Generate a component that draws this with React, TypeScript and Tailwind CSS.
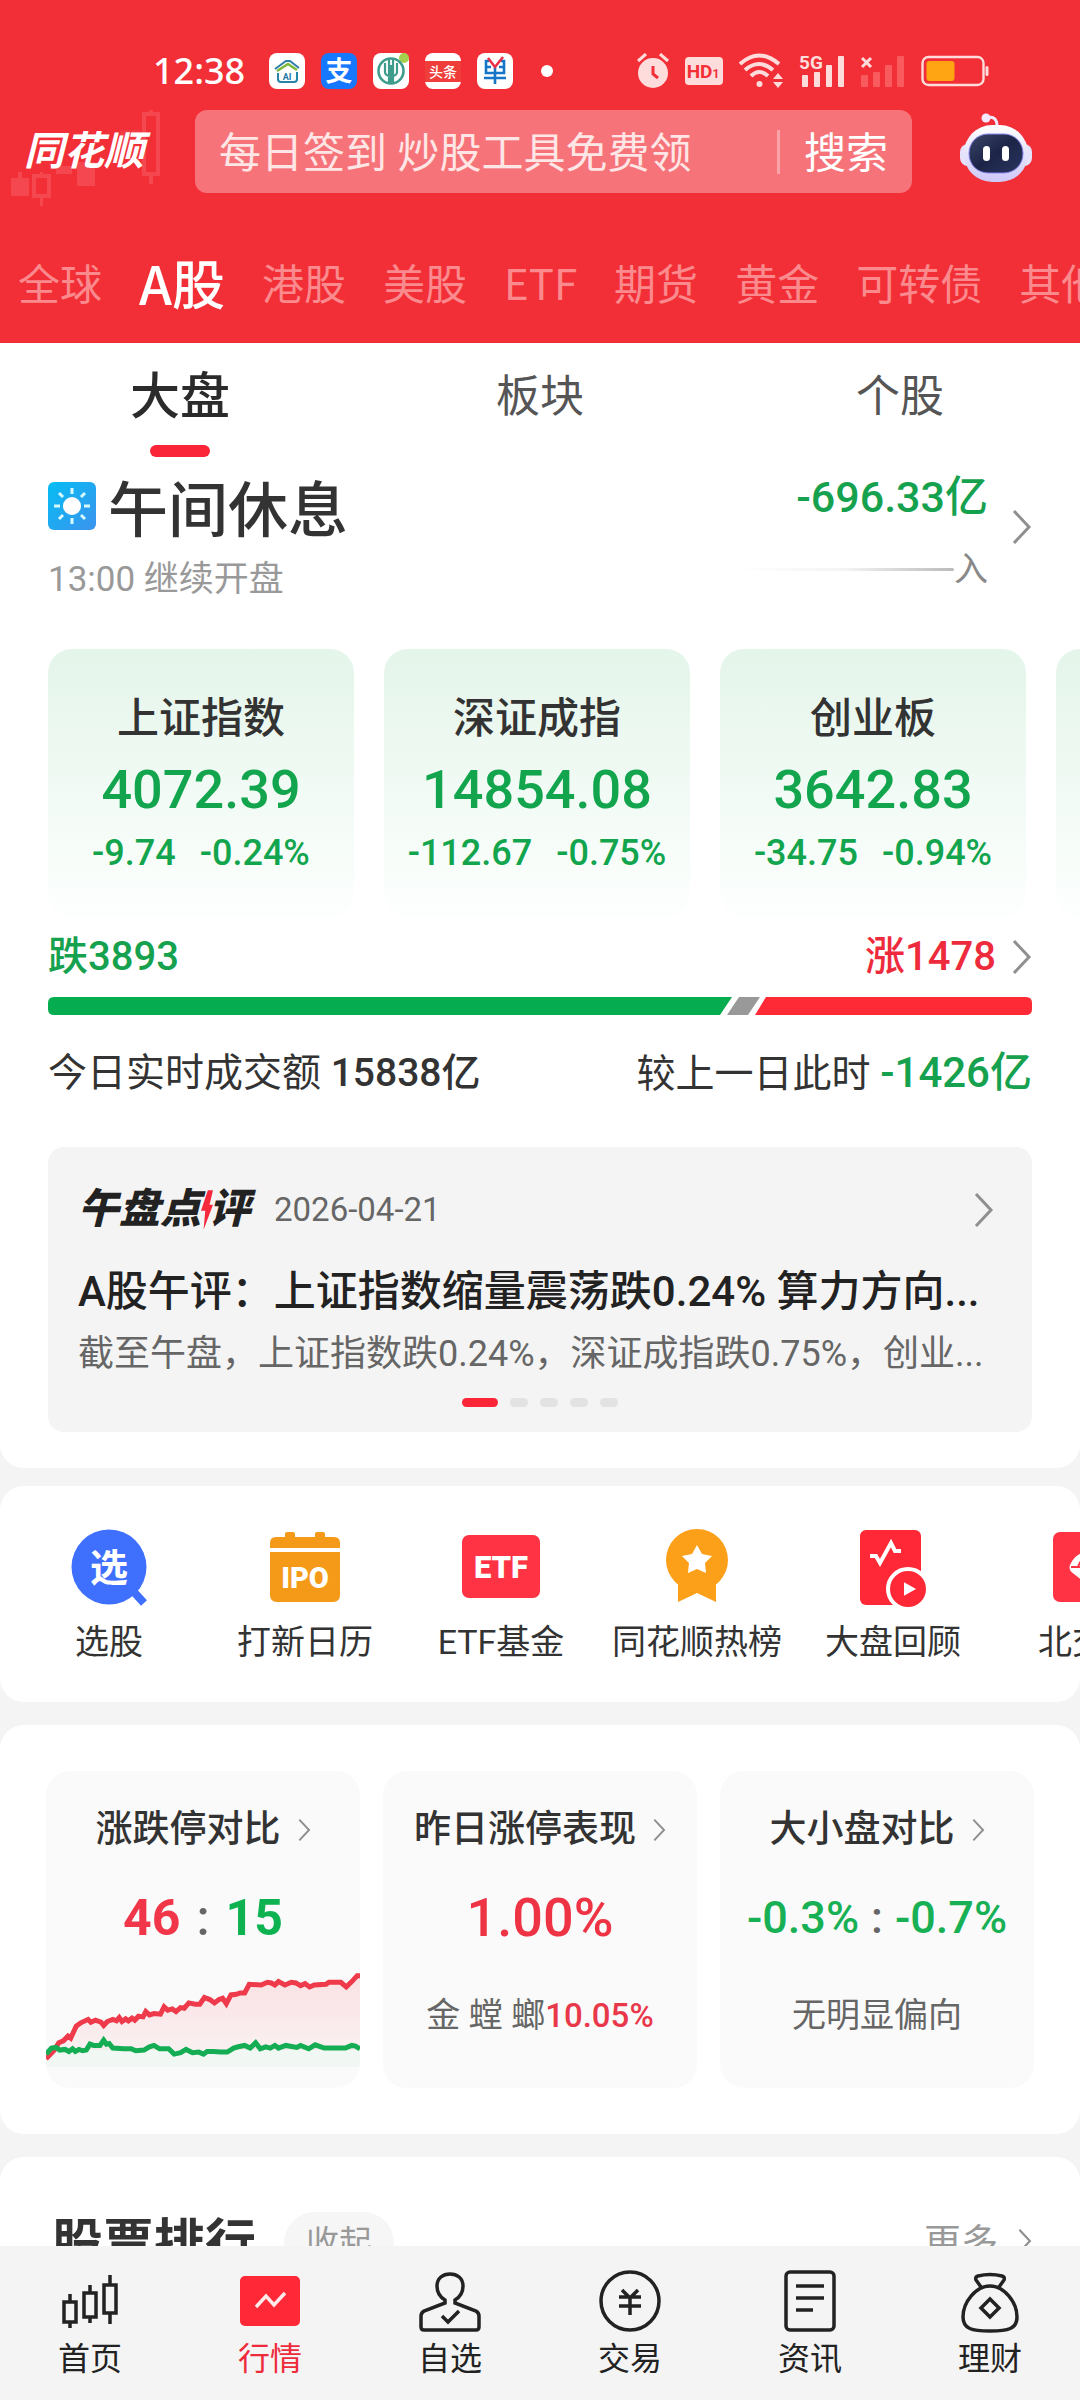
import type { ReactNode } from 'react'

const channels = ['全球', 'A股', '港股', '美股', 'ETF', '期货', '黄金', '可转债', '其他']

const indices = [
  { name: '上证指数', value: '4072.39', diff: '-9.74', pct: '-0.24%' },
  { name: '深证成指', value: '14854.08', diff: '-112.67', pct: '-0.75%' },
  { name: '创业板', value: '3642.83', diff: '-34.75', pct: '-0.94%' },
]

function Chevron({ className = 'w-5 h-9' }: { className?: string }) {
  return (
    <svg viewBox="0 0 20 36" className={`shrink-0 ${className}`} fill="none" stroke="#8f8f8f" strokeWidth="3">
      <path d="M2 2l15 16L2 34" />
    </svg>
  )
}

/* ---------- Status bar ---------- */

function StatusBar() {
  return (
    <div className="flex h-[46px] items-center justify-between pl-[153px] pr-[91px]">
      <div className="flex items-center gap-4">
        <span className="mr-2 font-['Noto_Sans',sans-serif] text-[36px] font-medium leading-none">12:38</span>
        <svg viewBox="0 0 36 36" className="h-9 w-9">
          <rect width="36" height="36" rx="8" fill="#fff" />
          <path d="M6 16L17 8h4l9 7" fill="none" stroke="#2f7fa8" strokeWidth="2" />
          <path d="M8 18l11-7 9 6" fill="none" stroke="#7db83a" strokeWidth="2.500" />
          <path d="M9 20v6q0 3 3 3h13q3 0 3-3v-7" fill="none" stroke="#2585a8" strokeWidth="2" />
          <text x="18" y="27" textAnchor="middle" fontSize="9" fontWeight="700" fill="#1c78a8">AI</text>
        </svg>
        <svg viewBox="0 0 36 36" className="h-9 w-9">
          <rect width="36" height="36" rx="8" fill="#1677ff" />
          <text x="18" y="28" textAnchor="middle" fontSize="27" fontWeight="700" fill="#fff">支</text>
        </svg>
        <svg viewBox="0 0 36 36" className="h-9 w-9">
          <rect width="36" height="36" rx="8" fill="#fff" />
          <circle cx="31" cy="5" r="5" fill="#a4cf4c" />
          <circle cx="18" cy="18" r="12.500" fill="none" stroke="#3d9c8c" strokeWidth="2.600" />
          <path d="M16 5v25M20 5v25M12 10v9q0 4 6 4t6-4v-9M18 12v18" fill="none" stroke="#3d9c8c" strokeWidth="2.200" />
        </svg>
        <svg viewBox="0 0 36 36" className="h-9 w-9">
          <rect width="36" height="36" rx="8" fill="#fff" />
          <rect y="8" width="36" height="21" fill="#ef3e3a" />
          <text x="18" y="24" textAnchor="middle" fontSize="14" fontWeight="500" fill="#fff">头条</text>
        </svg>
        <svg viewBox="0 0 36 36" className="h-9 w-9" fill="none" strokeWidth="2.600">
          <rect width="36" height="36" rx="8" fill="#fff" />
          <path d="M12 8H9v12h18V8h-3M9 14h5M22 14h5M7 25h22M18 14v17" stroke="#1576c8" />
          <path d="M11 5l7 9 8-10" stroke="#e8304a" />
        </svg>
        <span className="ml-3 h-3 w-3 rounded-full bg-white" />
      </div>

      <div className="flex items-center gap-4">
        <svg viewBox="0 0 32 36" className="h-9 w-8" fill="#ffdcdc">
          <circle cx="16" cy="20" r="15" />
          <path d="M1 8l8-7M31 8l-8-7" stroke="#ffdcdc" strokeWidth="3" />
          <path d="M16 13v8l5 4" fill="none" stroke="#f22f37" strokeWidth="3" />
        </svg>
        <svg viewBox="0 0 38 28" className="h-7 w-[38px]">
          <rect width="38" height="28" rx="4" fill="#ffdcdc" />
          <text x="18" y="21" textAnchor="middle" fontSize="19" fontWeight="700" fill="#f22f37">
            HD<tspan fontSize="12">1</tspan>
          </text>
        </svg>
        <svg viewBox="0 0 44 36" className="h-9 w-11" fill="none" stroke="#ffdcdc" strokeWidth="4">
          <path d="M1 11Q20-6 40 11M6 17Q20 5 34 17M12 23q8-8 17 0" />
          <circle cx="20.500" cy="31" r="3" fill="#ffdcdc" stroke="none" />
          <path d="M34 26l5-6 5 6zM34 29l5 6 5-6z" fill="#ffdcdc" stroke="none" />
        </svg>
        <svg viewBox="0 0 46 34" className="h-[34px] w-[46px] overflow-visible" fill="#ffdcdc">
          <text x="0" y="15" fontSize="19" fontWeight="700">5G</text>
          <rect x="3" y="21" width="6" height="12" rx="1" />
          <rect x="15" y="18" width="6" height="15" rx="1" />
          <rect x="27" y="11" width="6" height="22" rx="1" />
          <rect x="39" y="2" width="6" height="31" rx="1" />
        </svg>
        <svg viewBox="0 0 44 34" className="h-[34px] w-11" fill="#f85a5e">
          <path d="M1 4l9 9M10 4l-9 9" stroke="#ffdcdc" strokeWidth="3" />
          <rect x="0" y="21" width="7" height="12" rx="1" />
          <rect x="12" y="18" width="7" height="15" rx="1" />
          <rect x="24" y="11" width="7" height="22" rx="1" />
          <rect x="36" y="2" width="7" height="31" rx="1" />
        </svg>
        <svg viewBox="0 0 68 32" className="h-8 w-[68px]">
          <rect x="1.500" y="2" width="61" height="28" rx="6" fill="none" stroke="#ffdcdc" strokeWidth="2.400" />
          <rect x="5.500" y="6" width="28" height="20" rx="3" fill="#ffa514" />
          <rect x="64.500" y="11" width="3" height="10" rx="1.500" fill="#ffdcdc" />
        </svg>
      </div>
    </div>
  )
}

/* ---------- Header ---------- */

function Robot() {
  return (
    <svg viewBox="0 6 76 72" className="h-[72px] w-[76px] overflow-visible">
      <defs>
        <linearGradient id="shell" x1="0" y1="0" x2="0" y2="1">
          <stop offset="0" stopColor="#fff" />
          <stop offset="1" stopColor="#cdc8f8" />
        </linearGradient>
        <linearGradient id="visor" x1="0" y1="0" x2="1" y2="1">
          <stop offset="0" stopColor="#3c4668" />
          <stop offset="0.500" stopColor="#1c2547" />
          <stop offset="1" stopColor="#2b3560" />
        </linearGradient>
      </defs>
      <path d="M28 8q11-3 11 8" fill="none" stroke="#efeaff" strokeWidth="3" />
      <circle cx="28" cy="8" r="4.500" fill="#f4e9ff" />
      <rect x="2" y="34" width="72" height="22" rx="8" fill="#e6e2fb" />
      <rect x="6" y="15" width="64" height="57" rx="28" fill="url(#shell)" />
      <rect x="11" y="24" width="54" height="39" rx="19" fill="url(#visor)" stroke="#8b86f0" strokeWidth="1" />
      <rect x="25" y="36" width="7" height="15" rx="3.500" fill="#fff" />
      <rect x="44" y="36" width="7" height="15" rx="3.500" fill="#fff" />
    </svg>
  )
}

function Header() {
  return (
    <header className="bg-[#f22f37] pt-12 text-white">
      <StatusBar />
      <div className="mt-4 flex h-[83px] items-center">
        <div className="relative flex h-full w-[195px] shrink-0 items-center pl-6">
          <svg viewBox="0 0 160 96" className="absolute left-2 top-0 h-24 w-40" fill="#f4474f">
            <rect x="3" y="68" width="18" height="18" />
            <path d="M10 62h4v6h-4zM32 62h3v4h-3zM32 86h3v10h-3zM141 0h4v4h-4zM141 66h4v8h-4z" />
            <rect x="26" y="66" width="15" height="20" fill="none" stroke="#f4474f" strokeWidth="4" />
            <rect x="69" y="52" width="18" height="24" />
            <rect x="48" y="56" width="16" height="8" />
            <rect x="112" y="20" width="20" height="12" opacity=".5" />
            <rect x="136" y="4" width="14" height="60" fill="none" stroke="#f4474f" strokeWidth="4" />
          </svg>
          <span className="relative text-[40px] font-bold italic leading-none">同花顺</span>
        </div>
        <form className="flex h-full min-w-0 flex-1 items-center rounded-xl bg-[#f67479]">
          <input
            type="text"
            aria-label="搜索"
            placeholder="每日签到 炒股工具免费领"
            className="h-full min-w-0 flex-1 bg-transparent pl-6 pt-1 text-[42px] outline-none placeholder:text-[#ffe6e6] placeholder:opacity-100"
          />
          <span className="h-11 w-[3px] bg-[#fba4a7]" />
          <button type="button" className="h-full px-6 pt-1 text-[42px] leading-none">搜索</button>
        </form>
        <button type="button" aria-label="助手" className="flex w-[168px] shrink-0 items-center justify-center">
          <Robot />
        </button>
      </div>
      <nav className="mt-[30px] flex h-[120px] items-center gap-[37px] overflow-hidden whitespace-nowrap pb-[2px] pl-[18px] font-['Noto_Sans_CJK_SC',sans-serif]">
        {channels.map((c) => (
          <a
            key={c}
            href="#"
            className={c === 'A股' ? 'text-[53px] font-medium leading-none' : 'text-[42px] leading-none text-[#fa8a8d]'}
          >
            {c}
          </a>
        ))}
      </nav>
    </header>
  )
}

/* ---------- Market overview ---------- */

function Overview() {
  return (
    <section className="rounded-b-3xl bg-white pb-9">
      <div className="grid grid-cols-3">
        {['大盘', '板块', '个股'].map((t, i) => (
          <button key={t} type="button" className="flex flex-col items-center">
            <span
              className={`h-[102px] leading-[108px] ${i === 0 ? 'text-[50px] font-medium text-[#2b2b2b]' : 'text-[44px] text-[#555]'}`}
            >
              {t}
            </span>
            {i === 0 && <span className="h-3 w-[60px] rounded-full bg-[#fb2538]" />}
          </button>
        ))}
      </div>

      <div className="mt-4 flex items-start justify-between px-12">
        <div>
          <div className="flex items-center gap-3 pt-[3px]">
            <svg viewBox="0 0 48 48" className="mb-3 h-12 w-12">
              <defs>
                <linearGradient id="sky" x1="0" y1="0" x2="1" y2="1">
                  <stop offset="0" stopColor="#05bdf3" />
                  <stop offset="1" stopColor="#3c93ee" />
                </linearGradient>
              </defs>
              <rect width="48" height="48" rx="6" fill="url(#sky)" />
              <circle cx="24" cy="24" r="9" fill="#fff" />
              <path
                d="M24 6v6M24 36v6M6 24h6M36 24h6M11 11l4 4M33 33l4 4M37 11l-4 4M15 33l-4 4"
                stroke="#d6fbff" strokeWidth="3"
              />
            </svg>
            <h1 className="text-[60px] font-medium leading-[72px] text-[#333]">午间休息</h1>
          </div>
          <div className="mt-2 text-[35px] leading-[48px] text-[#999]">13:00 继续开盘</div>
        </div>
        <a href="#" className="flex items-center gap-6">
          <div className="flex flex-col items-end gap-6">
            <span className="text-[43px] font-medium leading-[48px] text-[#16a14f]">-696.33亿</span>
            <span className="flex items-center text-[34px] leading-[48px] text-[#888]">
              <span className="h-[3px] w-[220px] rounded-full bg-linear-to-r from-white via-[#f4f4f4] to-[#bbb]" />
              入
            </span>
          </div>
          <Chevron className="mb-3 h-9 w-5" />
        </a>
      </div>

      {/* Index cards, scroll sideways */}
      <div className="mt-[45px] flex gap-[30px] overflow-hidden pl-12">
        {indices.map((x) => (
          <a
            key={x.name}
            href="#"
            className="flex h-[268px] w-[306px] shrink-0 flex-col items-center rounded-3xl bg-linear-to-b from-[#e4f5ea] to-[#fdfffe] pt-[42px] text-[#12a54e]"
          >
            <span className="text-[42px] font-medium leading-[56px] text-[#333]">{x.name}</span>
            <span className="mt-[11px] text-[54px] font-medium leading-[64px]">{x.value}</span>
            <span className="mt-[7px] flex gap-6 text-[36px] font-medium leading-[48px]">
              <span>{x.diff}</span>
              <span>{x.pct}</span>
            </span>
          </a>
        ))}
        <div className="h-[268px] w-[306px] shrink-0 rounded-3xl bg-linear-to-b from-[#e4f5ea] to-[#fdfffe]" />
      </div>

      <div className="mt-3 px-12">
        <div className="flex items-center justify-between text-[40px] font-medium leading-[56px]">
          <span className="text-[#16a14f]">跌3893</span>
          <a href="#" className="flex items-center gap-4 text-[#ee2b3c]">
            涨1478
            <Chevron />
          </a>
        </div>
        <svg viewBox="0 0 984 18" preserveAspectRatio="none" className="mt-3 h-[18px] w-full">
          <path d="M6 0H684L672 18H6Q0 18 0 12V6Q0 0 6 0z" fill="#06ad50" />
          <path d="M691 0h21l-12 18h-21z" fill="#999" />
          <path d="M718 0H978Q984 0 984 6V12Q984 18 978 18H707z" fill="#fe2a36" />
        </svg>
        <div className="mt-[30px] flex justify-between text-[39px] leading-[56px] text-[#333]">
          <span>今日实时成交额 <b className="font-medium">15838亿</b></span>
          <span>较上一日此时 <b className="text-[42px] font-medium text-[#16a14f]">-1426亿</b></span>
        </div>
      </div>

      {/* Midday review */}
      <a href="#" className="mx-12 mt-[45px] block rounded-2xl bg-[#f4f4f4] px-[30px] pb-[25px] pt-[35px]">
        <div className="flex h-14 items-center">
          <span className="flex items-center text-[41px] font-black italic text-[#222]">
            午盘点
            <svg viewBox="0 0 14 46" className="h-[46px] w-[12px]" fill="#f5283c">
              <path d="M8 0h6l-4 17h4L3 46l2-22H0z" />
            </svg>
            <span className="-ml-1">评</span>
          </span>
          <span className="ml-6 text-[33px] text-[#666]">2026-04-21</span>
          <Chevron className="ml-auto mr-2 h-9 w-5" />
        </div>
        <div className="mt-6 truncate text-[42px] font-medium leading-[60px] text-[#222]">
          A股午评：上证指数缩量震荡跌0.24% 算力方向...
        </div>
        <div className="mt-[6px] truncate text-[36px] leading-[52px] text-[#666]">
          截至午盘，上证指数跌0.24%，深证成指跌0.75%，创业...
        </div>
        <div className="mt-[18px] flex justify-center gap-3">
          <span className="h-[9px] w-9 rounded-full bg-[#fb2538]" />
          {[1, 2, 3, 4].map((d) => (
            <span key={d} className="h-[9px] w-[18px] rounded-full bg-[#e2e2e2]" />
          ))}
        </div>
      </a>
    </section>
  )
}

/* ---------- Shortcuts ---------- */

const shortcuts: { label: string; icon: ReactNode }[] = [
  {
    label: '选股',
    icon: (
      <>
        <circle cx="40" cy="40" r="37.500" fill="#3f70fd" />
        <path d="M64 64l11 12" stroke="#3f70fd" strokeWidth="8" />
        <text x="40" y="54" textAnchor="middle" fontSize="38" fontWeight="700" fill="#fff">选</text>
      </>
    ),
  },
  {
    label: '打新日历',
    icon: (
      <>
        <path d="M5 21v-5q0-6 6-6h9V7q0-2 2-2h6q2 0 2 2v3h20V7q0-2 2-2h6q2 0 2 2v3h9q6 0 6 6v5z" fill="#f49a18" />
        <path d="M5 25h70v43q0 7-7 7H12q-7 0-7-7z" fill="#f49a18" />
        <text x="40" y="61" textAnchor="middle" fontSize="29" fontWeight="900" fill="#fff">IPO</text>
      </>
    ),
  },
  {
    label: 'ETF基金',
    icon: (
      <>
        <rect x="1" y="8" width="78" height="63" rx="7" fill="#ff3344" />
        <text x="40" y="51" textAnchor="middle" fontSize="31" fontWeight="900" fill="#fff">ETF</text>
      </>
    ),
  },
  {
    label: '同花顺热榜',
    icon: (
      <>
        <circle cx="40" cy="33" r="31" fill="#fca01a" />
        <path d="M21 54v21l19-9 19 9V54z" fill="#fca01a" />
        <path d="M40 18l5 9 10 2-7 7 1 10-9-4-9 4 1-10-7-7 10-2z" fill="#fff" />
      </>
    ),
  },
  {
    label: '大盘回顾',
    icon: (
      <>
        <rect x="7" y="3" width="61" height="75" rx="6" fill="#fe2836" />
        <path d="M17 29h6l4 7 11-20 4 8h6" fill="none" stroke="#fff" strokeWidth="4" />
        <circle cx="55" cy="62" r="20" fill="#fe2836" stroke="#fff" strokeWidth="4" />
        <path d="M52 57v10l9-5z" fill="#fff" stroke="#fff" strokeWidth="2" />
      </>
    ),
  },
  {
    label: '北交所',
    icon: (
      <>
        <rect x="4" y="5" width="72" height="70" rx="7" fill="#ff3344" />
        <path d="M40 24q-14 2-19 14-2 5 4 9l15 12 15-12q6-4 4-9-5-12-19-14z" fill="#fff" />
        <path d="M22 40h36M29 40q3-9 11-11 8 2 11 11" fill="none" stroke="#ff3344" strokeWidth="2" />
      </>
    ),
  },
]

function Shortcuts() {
  return (
    <section className="mt-[18px] flex overflow-hidden rounded-3xl bg-white pb-9 pl-[11px] pt-[41px]">
      {shortcuts.map((s) => (
        <a key={s.label} href="#" className="flex w-[196px] shrink-0 flex-col items-center">
          <svg viewBox="0 0 80 80" className="h-20 w-20 overflow-visible">{s.icon}</svg>
          <span className="mt-[11px] whitespace-nowrap text-[34px] leading-[48px] text-[#333]">{s.label}</span>
        </a>
      ))}
    </section>
  )
}

/* ---------- Market stats ---------- */

const RISE =
  '0,276 18,250 28,228 38,222 48,208 54,214 66,178 76,168 92,158 98,166 108,160 120,166 126,176 134,164 146,158 154,162 160,152 166,164 174,156 180,162 188,154 194,160 202,148 212,150 218,134 226,144 236,140 250,142 258,120 266,130 276,126 284,134 294,122 302,124 312,108 326,112 336,112 346,92 358,98 368,108 378,98 386,94 394,110 404,84 416,82 424,78 434,78 444,52 470,54 484,46 492,48 500,54 508,44 522,54 536,46 546,48 556,56 566,50 576,60 586,54 612,52 618,46 644,46 656,60 668,44 680,26 686,26'
const FALL =
  '0,262 12,244 22,242 30,250 42,248 50,254 58,246 64,254 72,248 80,252 88,250 96,232 104,236 118,236 126,220 132,232 138,230 146,244 170,246 186,246 196,252 214,250 226,240 236,236 248,246 268,246 280,262 294,258 306,248 320,258 334,256 344,262 352,254 366,254 382,256 396,256 410,244 420,240 434,236 446,244 458,228 468,246 480,240 490,244 500,236 508,244 524,236 548,242 556,236 574,246 588,234 608,244 654,244 668,236 676,238 686,246'

function StatCard({ title, children }: { title: string; children: ReactNode }) {
  return (
    <a href="#" className="flex h-[317px] flex-col items-center overflow-hidden rounded-3xl bg-[#fafafa] pt-[33px]">
      <span className="flex items-center gap-[17px] whitespace-nowrap text-[37px] font-medium leading-[52px] text-[#333]">
        {title}
        <Chevron className="h-6 w-[13px]" />
      </span>
      {children}
    </a>
  )
}

function Stats() {
  return (
    <section className="mt-[23px] grid grid-cols-3 gap-[23px] rounded-3xl bg-white p-[46px]">
      <StatCard title="涨跌停对比">
        <span className="mt-[30px] flex gap-4 text-[50px] font-bold leading-[64px]">
          <span className="text-[#f03648]">46</span>
          <span className="font-medium text-[#666]">:</span>
          <span className="text-[#0eb251]">15</span>
        </span>
        <svg viewBox="0 0 686 364" preserveAspectRatio="none" className="mt-[17px] h-[121px] w-full" fill="none">
          <defs>
            <linearGradient id="riseFill" x1="0" y1="0" x2="0" y2="1">
              <stop offset="0" stopColor="#ff2b3c" stopOpacity=".12" />
              <stop offset="1" stopColor="#ff2b3c" stopOpacity=".04" />
            </linearGradient>
          </defs>
          <polygon points={`${RISE} 686,250 0,250`} fill="url(#riseFill)" />
          <polygon points={`${FALL} 686,300 0,300`} fill="#0eb251" fillOpacity=".04" />
          <polyline points={RISE} stroke="#ee3a4a" strokeWidth="5" vectorEffect="non-scaling-stroke" />
          <polyline points={FALL} stroke="#14ad54" strokeWidth="5" vectorEffect="non-scaling-stroke" />
        </svg>
      </StatCard>
      <StatCard title="昨日涨停表现">
        <span className="mt-[30px] text-[54px] font-medium leading-[64px] text-[#ee3444]">1.00%</span>
        <span className="mt-[41px] whitespace-nowrap text-[34px] leading-[48px] text-[#666]">
          金 螳 螂<span className="text-[33px] font-medium text-[#e8384a]">10.05%</span>
        </span>
      </StatCard>
      <StatCard title="大小盘对比">
        <span className="mt-[30px] flex gap-3 text-[45px] font-medium leading-[64px] text-[#18b055]">
          <span>-0.3%</span>
          <span className="text-[#666]">:</span>
          <span>-0.7%</span>
        </span>
        <span className="mt-[41px] text-[34px] leading-[48px] text-[#666]">无明显偏向</span>
      </StatCard>
    </section>
  )
}

function Ranking() {
  return (
    <section className="mt-[23px] rounded-t-3xl bg-white px-12 pb-12 pt-[55px]">
      <div className="flex h-[62px] items-center">
        <h2 className="pl-1 text-[51px] font-bold leading-none text-[#333]">股票排行</h2>
        <button type="button" className="ml-7 h-[62px] rounded-full bg-[#f6f6f6] px-[22px] text-[33px] text-[#999]">
          收起
        </button>
        <a href="#" className="ml-auto flex items-center gap-5 text-[37px] leading-none text-[#999]">
          更多
          <Chevron className="mb-1 h-8 w-[14px]" />
        </a>
      </div>
    </section>
  )
}

/* ---------- Bottom navigation ---------- */

const tabs: { label: string; active?: boolean; icon: ReactNode }[] = [
  {
    label: '首页',
    icon: (
      <path d="M6 33h12v20H6zM12 25v8M12 53v6M26 24h12v24H26zM32 16v8M32 48v6M46 16h12v28H46zM52 6v10M52 44v11" />
    ),
  },
  {
    label: '行情',
    active: true,
    icon: (
      <>
        <rect x="2" y="7" width="60" height="50" rx="5" fill="#fe2836" stroke="none" />
        <path d="M18 38l10-11 8 9 11-12" stroke="#ffe9ea" />
      </>
    ),
  },
  {
    label: '自选',
    icon: (
      <>
        <path d="M27 34v-3C22 28 19 23 19 17C19 9 25 5 32 5S45 9 45 17C45 23 42 28 37 31v3L58 42Q61 44 61 47V58Q61 61 58 61H6Q3 61 3 58V47Q3 44 6 42z" />
        <path d="M24 47l6 6 11-11" />
      </>
    ),
  },
  {
    label: '交易',
    icon: (
      <>
        <circle cx="32" cy="32" r="29" />
        <path d="M24 21l8 8 8-8M21 28h22M21 37h22M32 28v18" />
      </>
    ),
  },
  {
    label: '资讯',
    icon: (
      <>
        <rect x="8" y="3" width="48" height="58" rx="4" />
        <path d="M18 17h28M18 29h28M18 41h17" />
      </>
    ),
  },
  {
    label: '理财',
    icon: (
      <>
        <path d="M23 18l-5-7q-1-3 2-4q12-3 24 0q3 1 2 4l-5 7" />
        <path d="M32 17C18 17 5 33 5 48C5 60 14 62 32 62S59 60 59 48C59 33 46 17 32 17z" />
        <path d="M32 30l9 9-9 9-9-9z" />
      </>
    ),
  },
]

function BottomNav() {
  return (
    <nav className="grid h-[154px] shrink-0 grid-cols-6 bg-[#f4f4f4] pt-[23px]">
      {tabs.map((t) => (
        <a key={t.label} href="#" className="flex flex-col items-center">
          <svg viewBox="0 0 64 64" className="h-16 w-16" fill="none" stroke="#222" strokeWidth="3.500">{t.icon}</svg>
          <span className={`mt-1 text-[32px] leading-[44px] ${t.active ? 'text-[#ee2b3c]' : 'text-[#222]'}`}>
            {t.label}
          </span>
        </a>
      ))}
    </nav>
  )
}

export default function App() {
  return (
    <div className="flex h-screen flex-col bg-[#f4f4f4] font-['Roboto','Noto_Sans_CJK_SC',sans-serif]">
      <Header />
      <main className="min-h-0 flex-1 overflow-y-auto [scrollbar-width:none]">
        <Overview />
        <Shortcuts />
        <Stats />
        <Ranking />
      </main>
      <BottomNav />
    </div>
  )
}
